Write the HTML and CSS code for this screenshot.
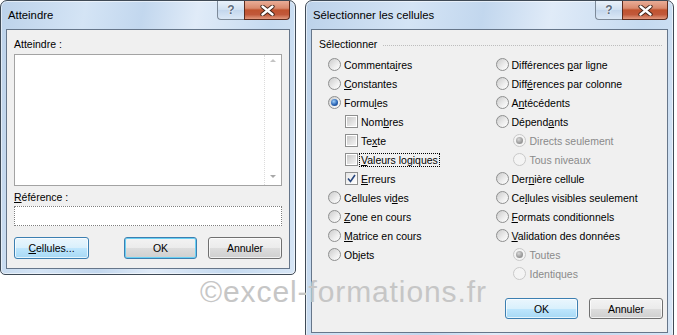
FILE: index.html
```html
<!DOCTYPE html>
<html lang="fr">
<head>
    <meta charset="UTF-8">
    <title>Atteindre / Sélectionner les cellules</title>
    <link rel="stylesheet" href="styles.css">
</head>
<body>

<div class="desk">
    <div class="dialog goto">
        <div class="titlebar">
            <span class="title">Atteindre</span>
            <div class="caption">
                <span class="help">?</span>
                <span class="close">
                    <svg width="15" height="11" viewBox="0 0 15 11">
                        <path d="M2.5 1.5 L12.5 9.5 M12.5 1.5 L2.5 9.5" stroke="#3a2016" stroke-width="4.2" stroke-linecap="round"/>
                        <path d="M2.5 1.5 L12.5 9.5 M12.5 1.5 L2.5 9.5" stroke="#ffffff" stroke-width="2.4" stroke-linecap="round"/>
                    </svg>
                </span>
            </div>
        </div>
        <div class="client">
            <div class="label">Atteindre :</div>
            <div class="listbox">
                <div class="scroll">
                    <span class="arrow up"></span>
                    <span class="arrow down"></span>
                </div>
            </div>
            <div class="label ref"><u>R</u>éférence :</div>
            <div class="input"></div>
            <div class="buttons">
                <span class="btn hot wide"><span><u>C</u>ellules...</span></span>
                <span class="btn default push">OK</span>
                <span class="btn cancel">Annuler</span>
            </div>
        </div>
    </div>

    <div class="dialog select">
        <div class="titlebar">
            <span class="title">Sélectionner les cellules</span>
            <div class="caption">
                <span class="help">?</span>
                <span class="close">
                    <svg width="15" height="11" viewBox="0 0 15 11">
                        <path d="M2.5 1.5 L12.5 9.5 M12.5 1.5 L2.5 9.5" stroke="#3a2016" stroke-width="4.2" stroke-linecap="round"/>
                        <path d="M2.5 1.5 L12.5 9.5 M12.5 1.5 L2.5 9.5" stroke="#ffffff" stroke-width="2.4" stroke-linecap="round"/>
                    </svg>
                </span>
            </div>
        </div>
        <div class="client">
            <div class="group">Sélectionner</div>
            <div class="options">
                <div class="col">
                    <div class="opt"><span class="radio"></span><span>Commenta<u>i</u>res</span></div>
                    <div class="opt"><span class="radio"></span><span><u>C</u>onstantes</span></div>
                    <div class="opt"><span class="radio on"></span><span>Formu<u>l</u>es</span></div>
                    <div class="opt sub"><span class="check"></span><span>Nom<u>b</u>res</span></div>
                    <div class="opt sub"><span class="check"></span><span>Te<u>x</u>te</span></div>
                    <div class="opt sub"><span class="check"></span><span class="focus"><u>V</u>aleurs logiques</span></div>
                    <div class="opt sub"><span class="check on">
                        <svg width="9" height="9" viewBox="0 0 9 9"><path d="M1 4.5 L3.5 7.5 L8 1" fill="none" stroke="#27467e" stroke-width="1.6"/></svg>
                    </span><span><u>E</u>rreurs</span></div>
                    <div class="opt"><span class="radio"></span><span>Cellules vi<u>d</u>es</span></div>
                    <div class="opt"><span class="radio"></span><span><u>Z</u>one en cours</span></div>
                    <div class="opt"><span class="radio"></span><span><u>M</u>atrice en cours</span></div>
                    <div class="opt"><span class="radio"></span><span>Ob<u>j</u>ets</span></div>
                </div>
                <div class="col">
                    <div class="opt"><span class="radio"></span><span>Différences <u>p</u>ar ligne</span></div>
                    <div class="opt"><span class="radio"></span><span>Diff<u>é</u>rences par colonne</span></div>
                    <div class="opt"><span class="radio"></span><span>A<u>n</u>técédents</span></div>
                    <div class="opt"><span class="radio"></span><span>Dépend<u>a</u>nts</span></div>
                    <div class="opt sub off"><span class="radio on"></span><span>Directs seulement</span></div>
                    <div class="opt sub off"><span class="radio"></span><span>Tous niveaux</span></div>
                    <div class="opt"><span class="radio"></span><span>Der<u>n</u>ière cellule</span></div>
                    <div class="opt"><span class="radio"></span><span>Ce<u>l</u>lules visibles seulement</span></div>
                    <div class="opt"><span class="radio"></span><span><u>F</u>ormats conditionnels</span></div>
                    <div class="opt"><span class="radio"></span><span><u>V</u>alidation des données</span></div>
                    <div class="opt sub off"><span class="radio on"></span><span>Toutes</span></div>
                    <div class="opt sub off"><span class="radio"></span><span>Identiques</span></div>
                </div>
            </div>
            <div class="buttons end">
                <span class="btn hot">OK</span>
                <span class="btn cancel">Annuler</span>
            </div>
        </div>
    </div>
</div>

<div class="watermark">©excel-formations.fr</div>

</body>
</html>
```

FILE: styles.css
```css
* {
    box-sizing: border-box;
}

body {
    margin: 0;
    width: 677px;
    height: 335px;
    overflow: hidden;
    position: relative;
    background-color: #ffffff;
    font-family: "Liberation Sans", Arial, sans-serif;
    font-size: 10.5px;
    color: #000;
}

.desk {
    display: flex;
    align-items: flex-start;
    gap: 9px;
}

/* Aero glass window frame */
.dialog {
    display: flex;
    flex-direction: column;
    flex-shrink: 0;
    padding: 0 5px 5px;
    border: 1px solid #3f4a56;
    border-radius: 7px 7px 5px 5px;
    background: linear-gradient(100deg, #bcd2ea 0%, #d4e4f5 25%, #c2d7ee 42%, #e0ebf8 58%, #c5daf0 80%, #d7e6f6 100%);
    box-shadow: inset 0 0 0 1px rgba(255, 255, 255, 0.55);
}

.goto {
    width: 296px;
    height: 275px;
}

.select {
    width: 369px;
    height: 339px;
}

.titlebar {
    display: flex;
    align-items: flex-start;
    height: 28px;
}

.title {
    padding: 7px 0 0 2px;
    font-size: 11.3px;
    line-height: 15px;
}

.caption {
    display: flex;
    margin-left: auto;
}

.help {
    width: 27px;
    height: 19px;
    display: flex;
    align-items: center;
    justify-content: center;
    border: 1px solid #7d8a99;
    border-top: none;
    border-right: none;
    border-radius: 0 0 0 4px;
    background: linear-gradient(#e9f1fa, #cfdff0 50%, #c3d6ec 51%, #dbe8f6);
    font-weight: bold;
    font-size: 12px;
    color: #5d6b7c;
    text-shadow: 0 0 2px #fff, 0 0 1px #fff;
}

.close {
    width: 46px;
    height: 19px;
    display: flex;
    align-items: center;
    justify-content: center;
    border: 1px solid #5c2c1e;
    border-top: none;
    border-radius: 0 0 4px 0;
    background: linear-gradient(#e9ad97, #d98a6e 40%, #c0532f 50%, #c1583a 75%, #e29a7f);
}

.client {
    flex: 1;
    display: flex;
    flex-direction: column;
    background-color: #f0f0f0;
    border: 1px solid #66768a;
    padding: 7px 7px 8px;
}

.label {
    line-height: 15px;
}

.label.ref {
    margin-top: 4px;
}

.listbox {
    margin-top: 2px;
    height: 132px;
    display: flex;
    justify-content: flex-end;
    background: #fff;
    border: 1px solid #a3a3a3;
}

.scroll {
    width: 17px;
    display: flex;
    flex-direction: column;
    justify-content: space-between;
    align-items: center;
    padding: 4px 0 7px;
    border-left: 1px dotted #dcdcdc;
}

.arrow {
    width: 0;
    height: 0;
    border-left: 3px solid transparent;
    border-right: 3px solid transparent;
}

.arrow.up {
    border-bottom: 3px solid #c4c4c4;
}

.arrow.down {
    border-top: 3px solid #a8a8a8;
}

.input {
    margin-top: 1px;
    height: 20px;
    background: #fff;
    border: 1px dotted #7f7f7f;
}

.buttons {
    display: flex;
    gap: 11px;
    margin-top: 11px;
}

.buttons.end {
    justify-content: flex-end;
    margin-top: 15px;
}

.btn {
    width: 73px;
    height: 22px;
    display: flex;
    align-items: center;
    justify-content: center;
    border: 1px solid #707070;
    border-radius: 3px;
    background: linear-gradient(#f3f3f3, #ebebeb 50%, #dddddd 51%, #cfcfcf);
    box-shadow: inset 0 0 0 1px rgba(255, 255, 255, 0.7);
}

.btn.wide {
    width: 75px;
}

.btn.cancel {
    width: 74px;
}

.btn.hot {
    border-color: #3c7fb1;
    background: linear-gradient(#eaf6fd, #d9f0fc 50%, #bee6fd 51%, #a7d9f5);
}

.btn.default {
    border-color: #3c7fb1;
    box-shadow: inset 0 0 0 1px #6ad0f3;
}

.push {
    margin-left: auto;
}

.select .client {
    padding: 7px 4px 12px 7px;
}

.select .buttons .btn {
    height: 21px;
}

.group {
    display: flex;
    align-items: center;
    line-height: 15px;
}

.group::after {
    content: "";
    flex: 1;
    margin: 1px 1px 0 6px;
    border-top: 1px dotted #bdbdbd;
}

.options {
    display: flex;
    margin-top: 3px;
    padding-left: 9px;
}

.col {
    width: 173px;
}

.opt {
    display: flex;
    align-items: center;
    gap: 3px;
    height: 19px;
    white-space: nowrap;
}

.opt.sub {
    padding-left: 17px;
}

.opt.off {
    color: #8a8a8a;
    gap: 4px;
}

.focus {
    outline: 1px dotted #000;
    padding: 0 1px;
    margin-left: -1px;
}

.radio {
    position: relative;
    flex-shrink: 0;
    width: 13px;
    height: 13px;
    border-radius: 50%;
    border: 1px solid #8e8f8f;
    background: linear-gradient(135deg, #cbcbcb, #eeeeee 60%, #ffffff);
}

.radio.on::after {
    content: "";
    position: absolute;
    inset: 2px;
    border-radius: 50%;
    background: radial-gradient(circle at 40% 35%, #9fd0fa, #2a64b4 55%, #173c7a);
}

.off .radio {
    border-color: #c9c9c9;
    background: #f4f4f4;
}

.off .radio.on::after {
    background: radial-gradient(circle at 40% 35%, #d8d8d8, #9a9a9a 60%, #858585);
}

.check {
    flex-shrink: 0;
    width: 13px;
    height: 13px;
    padding: 1px;
    border: 1px solid #8e8f8f;
    background: linear-gradient(135deg, #c9c9c9, #f4f4f4) content-box, #fff;
}

.check.on {
    display: flex;
    align-items: center;
    justify-content: center;
    padding: 0;
    background: linear-gradient(135deg, #e6e6e6, #ffffff);
}

.watermark {
    position: absolute;
    left: 200px;
    top: 275px;
    font-family: "Liberation Sans", Arial, sans-serif;
    font-size: 30px;
    letter-spacing: 0.9px;
    line-height: 34px;
    color: #c6c6c6;
    white-space: nowrap;
}
```
